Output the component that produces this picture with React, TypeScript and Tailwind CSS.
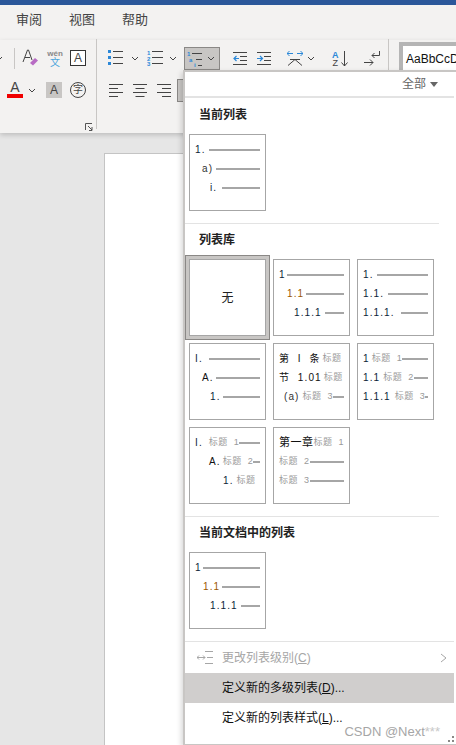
import { FC, ReactNode } from "react";

const cjk = "font-['Liberation_Sans','Noto_Sans_CJK_SC',sans-serif]";

type Row = {
	pad: string;
	num?: string;
	numColor?: string;
	label?: string;
	labelGap?: string;
	gap?: string;
};

const Chevron: FC<{ className?: string }> = ({ className }) => (
	<svg width="8" height="5" viewBox="0 0 8 5" className={`shrink-0 ${className || ""}`}>
		<path d="M1 1l3 3 3-3" fill="none" stroke="#444" strokeWidth="1" />
	</svg>
);

const Ico: FC<{ w?: number; h?: number; children: ReactNode; className?: string }> = ({
	w = 16,
	h = 16,
	children,
	className,
}) => (
	<svg width={w} height={h} viewBox={`0 0 ${w} ${h}`} className={`shrink-0 ${className || ""}`}>
		{children}
	</svg>
);

const Sep: FC<{ className?: string }> = ({ className }) => (
	<div className={`w-px bg-[#c8c6c4] shrink-0 ${className || "h-[20px]"}`} />
);

const AlignIcon: FC<{ kind: "l" | "c" | "r" }> = ({ kind }) => {
	const short = kind === "l" ? "M0 5.5h9M0 13.5h9" : kind === "c" ? "M2.5 5.5h9M2.5 13.5h9" : "M5 5.5h9M5 13.5h9";
	return (
		<Ico w={14} h={16}>
			<path d={`M0 1.5h14M0 9.5h14 ${short}`} stroke="#444" fill="none" />
		</Ico>
	);
};

const IndentIcon: FC<{ dir: "l" | "r" }> = ({ dir }) => (
	<Ico w={14} h={14}>
		<path d="M0 1.5h14M7 5.5h7M7 9.5h7M0 13.5h14" stroke="#444" fill="none" />
		{dir === "l" ? (
			<path d="M6 7.5H1M3.5 5L1 7.5 3.5 10" stroke="#2b88d8" fill="none" strokeWidth="1.2" />
		) : (
			<path d="M0 7.5h5M3 5l2.500 2.500L3 10" stroke="#2b88d8" fill="none" strokeWidth="1.2" />
		)}
	</Ico>
);

const Ribbon: FC = () => (
	<div className="flex h-[93px] bg-[#f3f2f1] shadow-[0_2px_5px_rgba(0,0,0,0.18)] relative">
		<div className="w-[96px] shrink-0 relative">
			<div className="flex items-center h-[20px] mt-[8px]">
				<Chevron className="-ml-[5px]" />
				<Sep className="h-[21px] ml-[11px]" />
				<Ico w={17} h={18} className="ml-[7px]">
					<path d="M1 13L5.500 1h1L10 11M3 8.500h5" stroke="#444" fill="none" />
					<path d="M8 14l5-5 3 2.500-5 5z" fill="#b86bc4" />
				</Ico>
				<div className="w-[16px] ml-[8px] flex flex-col items-center leading-none shrink-0">
					<span className="text-[8px] text-[#888] font-['Liberation_Sans',sans-serif] font-bold leading-[9px]">wén</span>
					<span className={`text-[10px] text-[#4aa5dc] leading-[10px] ${cjk}`}>文</span>
				</div>
				<div className="w-[16px] h-[16px] ml-[7px] border border-[#333] bg-white flex items-center justify-center text-[12px] leading-none text-[#444] font-['Liberation_Sans',sans-serif] shrink-0">
					A
				</div>
			</div>
			<div className="flex items-center h-[20px] mt-[12px] pl-[7px]">
				<div className="w-[16px] h-[16px] flex flex-col items-center">
					<span className="text-[14px] leading-[11px] text-[#444] font-['Liberation_Sans',sans-serif]">A</span>
					<div className="w-[16px] h-[4px] bg-[#f00000] mt-[1px]" />
				</div>
				<Chevron className="ml-[5px]" />
				<div className="w-[16px] h-[16px] ml-[10px] bg-[#c8c6c4] flex items-center justify-center text-[12px] leading-none text-[#444] font-['Liberation_Sans',sans-serif]">
					A
				</div>
				<div className={`w-[16px] h-[16px] ml-[8px] rounded-full border border-[#444] flex items-center justify-center text-[10px] leading-none text-[#444] ${cjk}`}>
					字
				</div>
			</div>
			<div className="absolute left-[85px] top-[83px]">
				<Ico w={8} h={8}>
					<path d="M0.500 7V0.500H7M3 3l4 4M7 4v3.500H4" stroke="#555" fill="none" />
				</Ico>
			</div>
		</div>
		<Sep className="h-[90px] -mt-px bg-[#b8b6b4]" />
		<div className="w-[291px] shrink-0">
			<div className="flex items-center h-[20px] mt-[8px]">
				<Ico className="ml-[11px]">
					<path d="M0 0h3v3H0zM0 6h3v3H0zM0 12h3v3H0z" fill="#2b88d8" />
					<path d="M5 1.500h10M5 7.500h10M5 13.500h10" stroke="#444" fill="none" />
				</Ico>
				<Chevron className="ml-[7px]" />
				<Ico className="ml-[8px]">
					<text x="0" y="5" fontSize="6" fontWeight="bold" fill="#2b88d8" fontFamily="Liberation Sans">1</text>
					<text x="0" y="10.500" fontSize="6" fontWeight="bold" fill="#2b88d8" fontFamily="Liberation Sans">2</text>
					<text x="0" y="16" fontSize="6" fontWeight="bold" fill="#2b88d8" fontFamily="Liberation Sans">3</text>
					<path d="M5 1.500h11M5 7.500h11M5 13.500h11" stroke="#444" fill="none" />
				</Ico>
				<Chevron className="ml-[6px]" />
				<div className="ml-[7px] w-[36px] h-[23px] bg-[#c8c6c4] border border-[#8a8886] flex items-center pl-[2px] self-start -mt-[1px] shrink-0">
					<Ico>
						<text x="0" y="5" fontSize="6" fontWeight="bold" fill="#2b88d8" fontFamily="Liberation Sans">1</text>
						<text x="2" y="10.500" fontSize="6" fontWeight="bold" fill="#2b88d8" fontFamily="Liberation Sans">a</text>
						<text x="7" y="16" fontSize="6" fontWeight="bold" fill="#2b88d8" fontFamily="Liberation Sans">i</text>
						<path d="M5 2.500h10M9 8.500h6M11 14.500h4" stroke="#444" fill="none" />
					</Ico>
					<Chevron className="ml-[4px]" />
				</div>
				<Sep className="ml-[4px]" />
				<div className="ml-[8px] shrink-0">
					<IndentIcon dir="l" />
				</div>
				<div className="ml-[10px] shrink-0">
					<IndentIcon dir="r" />
				</div>
				<Sep className="ml-[8px]" />
				<Ico w={16} h={16} className="ml-[7px]">
					<path d="M1 15.500L8 9.500l7 6M3 9.500h10" stroke="#444" fill="none" />
					<path d="M0 3.500h6M2.500 1L0 3.500 2.500 6M10 3.500h6M13.500 1L16 3.500 13.500 6" stroke="#2b88d8" fill="none" />
				</Ico>
				<Chevron className="ml-[4px]" />
				<Sep className="ml-[9px]" />
				<Ico w={17} h={17} className="ml-[7px]">
					<text x="0" y="7.500" fontSize="9" fontWeight="bold" fill="#2b88d8" fontFamily="Liberation Sans">A</text>
					<text x="0.500" y="16" fontSize="9" fill="#444" fontFamily="Liberation Sans">Z</text>
					<path d="M12.500 1v15M9.500 12.500l3 3.500 3-3.500" stroke="#444" fill="none" />
				</Ico>
				<Sep className="ml-[6px]" />
				<Ico w={16} h={16} className="ml-[8px]">
					<path d="M0 12.500h9M6 9.500l3 3-3 3M15.500 1v4.500H8" stroke="#444" fill="none" />
					<path d="M10.500 3L8 5.500 10.500 8" stroke="#444" fill="none" />
				</Ico>
			</div>
			<div className="flex items-center h-[16px] mt-[15px] pl-[12px] gap-[10px]">
				<AlignIcon kind="l" />
				<AlignIcon kind="c" />
				<AlignIcon kind="r" />
				<div className="w-[10px] h-[23px] -ml-[4px] self-start -mt-[4px] bg-[#c8c6c4] border border-[#8a8886]" />
			</div>
		</div>
		<Sep className="h-[32px] -mt-px bg-[#b8b6b4]" />
		<div className="ml-[10px] mt-[2px] w-[57px] h-[30px] bg-white border-[4px] border-b-0 border-r-0 border-[#b5b5b5] pl-[3px] pt-[7px] text-[12px] leading-none text-[#111] font-['Liberation_Sans',sans-serif] whitespace-nowrap overflow-hidden">
			AaBbCcD
		</div>
	</div>
);

const Tile: FC<{ rows?: Row[]; text?: string }> = ({ rows, text }) => (
	<div className={`w-[77px] h-[77px] border border-[#a6a6a6] bg-white overflow-hidden whitespace-nowrap ${cjk}`}>
		{text && <div className="h-full flex items-center justify-center text-[12px] text-[#222]">{text}</div>}
		{rows && (
			<div className="pt-[5px] px-[5px]">
				{rows.map((r, i) => (
					<div key={i} className={`flex items-center h-[19px] ${r.pad}`}>
						{r.num && (
							<span className={`shrink-0 text-[10px] leading-none whitespace-pre ${r.numColor || "text-[#0c2338] tracking-[1.1px]"}`}>{r.num}</span>
						)}
						{r.label && <span className={`shrink-0 text-[9px] tracking-[0.5px] leading-none whitespace-pre text-[#9a9a9a] ${r.labelGap || "ml-[2px]"}`}>{r.label}</span>}
						<div className={`flex-1 h-[2px] bg-[#a6a6a6] min-w-0 ${r.gap || "ml-[2px]"}`} />
					</div>
				))}
			</div>
		)}
	</div>
);

const brown = "text-[#9c5700] tracking-[1.1px]";
const black = "text-[#111] tracking-[1.1px]";

const currentRows: Row[] = [
	{ pad: "pl-0", num: "1.", gap: "ml-[3px]" },
	{ pad: "pl-[7px]", num: "a)", numColor: "text-[#333] tracking-[1.1px]", gap: "ml-[3px]" },
	{ pad: "pl-[15px]", num: "i.", gap: "ml-[5px]" },
];
const numberedRows: Row[] = [
	{ pad: "pl-0", num: "1", gap: "ml-px" },
	{ pad: "pl-[8px]", num: "1.1", numColor: brown, gap: "ml-[2px]" },
	{ pad: "pl-[15px]", num: "1.1.1", gap: "ml-[3px]" },
];
const dottedRows: Row[] = [
	{ pad: "pl-0", num: "1.", gap: "ml-[3px]" },
	{ pad: "pl-0", num: "1.1.", gap: "ml-[4px]" },
	{ pad: "pl-0", num: "1.1.1.", gap: "ml-[6px]" },
];
const romanRows: Row[] = [
	{ pad: "pl-0", num: "I.", gap: "ml-[6px]" },
	{ pad: "pl-[7px]", num: "A.", numColor: black, gap: "ml-[2px]" },
	{ pad: "pl-[15px]", num: "1.", gap: "ml-[2px]" },
];
const articleRows: Row[] = [
	{ pad: "pl-0", num: "第  I  条", label: "标题", numColor: black, gap: "ml-0 !bg-transparent" },
	{ pad: "pl-0", num: "节  1.01", label: "标题", numColor: black, gap: "ml-0 !bg-transparent" },
	{ pad: "pl-[5px]", num: "(a)", label: "标题  3", labelGap: "ml-[3px]", numColor: "text-[#333] tracking-[1.1px]", gap: "ml-0" },
];
const headingRows: Row[] = [
	{ pad: "pl-0", num: "1", label: "标题  1", gap: "ml-0" },
	{ pad: "pl-0", num: "1.1", label: "标题  2", labelGap: "ml-[3px]", gap: "ml-0" },
	{ pad: "pl-0", num: "1.1.1", label: "标题  3", labelGap: "ml-[4px]", gap: "ml-0" },
];
const romanHeadingRows: Row[] = [
	{ pad: "pl-0", num: "I.", label: "标题  1", labelGap: "ml-[6px]", gap: "ml-0" },
	{ pad: "pl-[14px]", num: "A.", numColor: black, label: "标题  2", gap: "ml-0" },
	{ pad: "pl-[28px]", num: "1.", label: "标题", labelGap: "ml-[3px]", gap: "ml-0 !bg-transparent" },
];
const chapterRows: Row[] = [
	{ pad: "pl-0", num: "第一章", numColor: "text-[#111] !text-[11px] tracking-[0.5px]", label: "标题  1", labelGap: "ml-0", gap: "ml-0 !bg-transparent" },
	{ pad: "pl-0", label: "标题  2", labelGap: "ml-0", gap: "ml-0" },
	{ pad: "pl-0", label: "标题  3", labelGap: "ml-0", gap: "ml-0" },
];
const documentRows: Row[] = numberedRows;

const Title: FC<{ children: ReactNode }> = ({ children }) => (
	<div className="h-[18px] pl-[14px] text-[12px] leading-[18px] font-semibold text-[#222]">{children}</div>
);

const Menu: FC = () => (
	<div className={`absolute left-[183px] top-[70px] w-[273px] h-[675px] bg-white border-2 border-[#c8c6c4] border-r-0 border-b-[1px] shadow-[-2px_2px_5px_rgba(0,0,0,0.15)] ${cjk}`}>
		<div className="h-[26px] mr-[2px] border-b-2 border-[#e3e3e3] flex items-center justify-end pr-[16px] text-[12px] text-[#666]">
			全部
			<svg width="8" height="5" viewBox="0 0 8 5" className="ml-[4px]">
				<path d="M0 0h8L4 5z" fill="#666" />
			</svg>
		</div>
		<div className="mt-[8px]">
			<Title>当前列表</Title>
		</div>
		<div className="mt-[10px] pl-[4px]">
			<Tile rows={currentRows} />
		</div>
		<div className="mt-[12px] mr-[17px] h-px bg-[#e3e3e3]" />
		<div className="mt-[7px]">
			<Title>列表库</Title>
		</div>
		<div className="mt-[10px] grid grid-cols-[77px_77px_77px] gap-x-[7px] gap-y-[7px] pl-[4px]">
			<div className="relative">
				<div className="absolute -inset-[4px] border border-[#8a8886] bg-[#c8c6c4]" />
				<div className="relative">
					<Tile text="无" />
				</div>
			</div>
			<Tile rows={numberedRows} />
			<Tile rows={dottedRows} />
			<Tile rows={romanRows} />
			<Tile rows={articleRows} />
			<Tile rows={headingRows} />
			<Tile rows={romanHeadingRows} />
			<Tile rows={chapterRows} />
		</div>
		<div className="mt-[12px] mr-[17px] h-px bg-[#e3e3e3]" />
		<div className="mt-[7px]">
			<Title>当前文档中的列表</Title>
		</div>
		<div className="mt-[10px] pl-[4px]">
			<Tile rows={documentRows} />
		</div>
		<div className="mt-[12px] mr-[2px] h-px bg-[#e3e3e3]" />
		<div className="h-[31px] flex items-center text-[12px] text-[#a6a6a6] mr-[2px]">
			<Ico w={17} h={13} className="ml-[12px]">
				<path d="M8 0.500h8M10 6.500h6M8 12.500h8" stroke="#a6a6a6" fill="none" />
				<path d="M0 6.500h8M2 4.500l-2 2 2 2M6 4.500l2 2-2 2" stroke="#a6a6a6" fill="none" />
			</Ico>
			<span className="ml-[8px]">
				更改列表级别(<span className="underline">C</span>)
			</span>
			<svg width="7" height="10" viewBox="0 0 7 10" className="ml-auto mr-[7px]">
				<path d="M1 1l5 4-5 4" fill="none" stroke="#a6a6a6" />
			</svg>
		</div>
		<div className="h-[30px] mr-[2px] bg-[#d0cecd] flex items-center pl-[37px] text-[12px] text-[#111]">
			<span>
				定义新的多级列表(<span className="underline">D</span>)...
			</span>
		</div>
		<div className="h-[29px] mr-[2px] flex items-center pl-[37px] text-[12px] text-[#111]">
			<span>
				定义新的列表样式(<span className="underline">L</span>)...
			</span>
		</div>
		<div className="absolute right-[16px] bottom-[6px] text-[13px] leading-none text-[#a6a6a6] font-['Liberation_Sans',sans-serif]">
			CSDN @Next<span className="text-[#c8c8c8]">***</span>
		</div>
		<svg width="6" height="6" viewBox="0 0 6 6" className="absolute right-[2px] bottom-[2px]">
			<path d="M4 0h2v2H4zM0 4h2v2H0zM4 4h2v2H4z" fill="#8a8886" />
		</svg>
	</div>
);

const App: FC = () => {
	return (
		<div className={`relative w-[456px] h-[745px] overflow-hidden bg-[#e6e6e6] ${cjk}`}>
			<div className="h-[5px] bg-[#2b579a]" />
			<div className="h-[35px] bg-[#f3f2f1] flex items-start pt-[6px] pl-[16px] gap-[27px] text-[13px] leading-[18px] text-[#444]">
				<span>审阅</span>
				<span>视图</span>
				<span>帮助</span>
			</div>
			<Ribbon />
			<div className="mt-[20px] ml-[104px] h-[700px] bg-white border-l border-t border-[#c4c4c4]" />
			<Menu />
		</div>
	);
};

export default App;
